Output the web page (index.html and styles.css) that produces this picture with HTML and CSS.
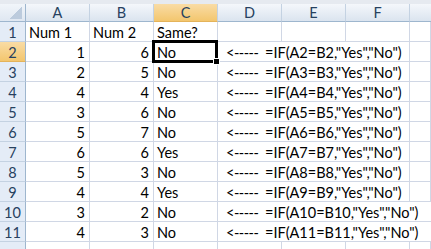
FILE: index.html
```html
<!DOCTYPE html>
<html lang="en">
<head>
    <meta charset="UTF-8">
    <title>Sheet1</title>
    <link rel="stylesheet" href="styles.css">
</head>
<body>
    <div class="ribbon-edge"></div>
    <div class="sheet">
        <div class="corner"></div>
        <div class="colhdr">A</div>
        <div class="colhdr">B</div>
        <div class="colhdr sel">C</div>
        <div class="colhdr">D</div>
        <div class="colhdr">E</div>
        <div class="colhdr">F</div>
        <div class="colhdr last"></div>

        <div class="rowhdr">1</div>
        <div class="cell">Num 1</div>
        <div class="cell">Num 2</div>
        <div class="cell">Same?</div>
        <div class="cell"></div>
        <div class="cell"></div>
        <div class="cell"></div>
        <div class="cell"></div>

        <div class="rowhdr sel">2</div>
        <div class="cell num">1</div>
        <div class="cell num">6</div>
        <div class="cell active">No</div>
        <div class="cell note span3"><span class="arrow">&lt;-----</span>=IF(A2=B2,"Yes","No")</div>
        <div class="cell"></div>

        <div class="rowhdr">3</div>
        <div class="cell num">2</div>
        <div class="cell num">5</div>
        <div class="cell">No</div>
        <div class="cell note span3"><span class="arrow">&lt;-----</span>=IF(A3=B3,"Yes","No")</div>
        <div class="cell"></div>

        <div class="rowhdr">4</div>
        <div class="cell num">4</div>
        <div class="cell num">4</div>
        <div class="cell">Yes</div>
        <div class="cell note span3"><span class="arrow">&lt;-----</span>=IF(A4=B4,"Yes","No")</div>
        <div class="cell"></div>

        <div class="rowhdr">5</div>
        <div class="cell num">3</div>
        <div class="cell num">6</div>
        <div class="cell">No</div>
        <div class="cell note span3"><span class="arrow">&lt;-----</span>=IF(A5=B5,"Yes","No")</div>
        <div class="cell"></div>

        <div class="rowhdr">6</div>
        <div class="cell num">5</div>
        <div class="cell num">7</div>
        <div class="cell">No</div>
        <div class="cell note span3"><span class="arrow">&lt;-----</span>=IF(A6=B6,"Yes","No")</div>
        <div class="cell"></div>

        <div class="rowhdr">7</div>
        <div class="cell num">6</div>
        <div class="cell num">6</div>
        <div class="cell">Yes</div>
        <div class="cell note span3"><span class="arrow">&lt;-----</span>=IF(A7=B7,"Yes","No")</div>
        <div class="cell"></div>

        <div class="rowhdr">8</div>
        <div class="cell num">5</div>
        <div class="cell num">3</div>
        <div class="cell">No</div>
        <div class="cell note span3"><span class="arrow">&lt;-----</span>=IF(A8=B8,"Yes","No")</div>
        <div class="cell"></div>

        <div class="rowhdr">9</div>
        <div class="cell num">4</div>
        <div class="cell num">4</div>
        <div class="cell">Yes</div>
        <div class="cell note span3"><span class="arrow">&lt;-----</span>=IF(A9=B9,"Yes","No")</div>
        <div class="cell"></div>

        <div class="rowhdr">10</div>
        <div class="cell num">3</div>
        <div class="cell num">2</div>
        <div class="cell">No</div>
        <div class="cell note span4"><span class="arrow">&lt;-----</span>=IF(A10=B10,"Yes","No")</div>

        <div class="rowhdr">11</div>
        <div class="cell num">4</div>
        <div class="cell num">3</div>
        <div class="cell">No</div>
        <div class="cell note span4"><span class="arrow">&lt;-----</span>=IF(A11=B11,"Yes","No")</div>

        <!-- next row, only its top edge shows -->
        <div class="rowhdr"></div>
        <div class="cell"></div>
        <div class="cell"></div>
        <div class="cell"></div>
        <div class="cell"></div>
        <div class="cell"></div>
        <div class="cell"></div>
        <div class="cell"></div>
    </div>
</body>
</html>
```

FILE: styles.css
```css
body {
    margin: 0;
    background: #fff;
    font-family: Lato, "Liberation Sans", sans-serif;
    font-size: 14.5px;
    color: #000;
    overflow: hidden;
}
.ribbon-edge {
    height: 4px;
    background: #e6eaf0;
}
.sheet {
    display: grid;
    grid-template-columns: 26px repeat(6, 64px) 1fr;
    grid-template-rows: 18px;
    grid-auto-rows: 20px;
}
.sheet > div {
    box-sizing: border-box;
    white-space: nowrap;
    overflow: hidden;
}

/* headers */
.corner {
    position: relative;
    background: linear-gradient(#f1f5fa, #dfe7f1);
    border-right: 1px solid #9eb6ce;
    border-bottom: 1px solid #9eb6ce;
}
.corner::after {
    content: "";
    position: absolute;
    right: 3px;
    bottom: 2px;
    width: 13px;
    height: 12px;
    background: linear-gradient(135deg, transparent 50%, #bccbdd 50%);
}
.colhdr {
    background: linear-gradient(#f4f7fb, #dbe4ef);
    border-right: 1px solid #c4d2e2;
    border-bottom: 1px solid #9eb6ce;
    color: #27415f;
    text-align: center;
    line-height: 17px;
}
.colhdr.last { border-right: none; }
.rowhdr {
    background: #e4ecf7;
    border-right: 1px solid #9eb6ce;
    border-bottom: 1px solid #c4d2e2;
    color: #27415f;
    text-align: center;
    line-height: 21px;
}
.colhdr.sel, .rowhdr.sel {
    background: linear-gradient(#f9dca5, #f3c66e);
    border-bottom-color: #e4b35a;
}

/* cells */
.cell {
    border-right: 1px solid #d0d7e5;
    border-bottom: 1px solid #d0d7e5;
    padding: 0 3px;
    line-height: 22px;
}
.cell.num {
    text-align: right;
    padding-right: 4px;
}
.cell.note {
    padding-left: 8px;
}
.span3 { grid-column: span 3; }
.span4 { grid-column: span 4; border-right: none; }
.arrow {
    display: inline-block;
    width: 39px;
    letter-spacing: -0.5px;
}

/* active cell frame + fill handle */
.sheet > .cell.active {
    position: relative;
    overflow: visible;
}
.cell.active::before {
    content: "";
    position: absolute;
    left: -2px;
    top: -2px;
    right: -1px;
    bottom: -2px;
    border: 3px solid #000;
}
.cell.active::after {
    content: "";
    position: absolute;
    right: -3px;
    bottom: -4px;
    width: 5px;
    height: 5px;
    background: #000;
    border: 1px solid #fff;
    z-index: 1;
}
```
